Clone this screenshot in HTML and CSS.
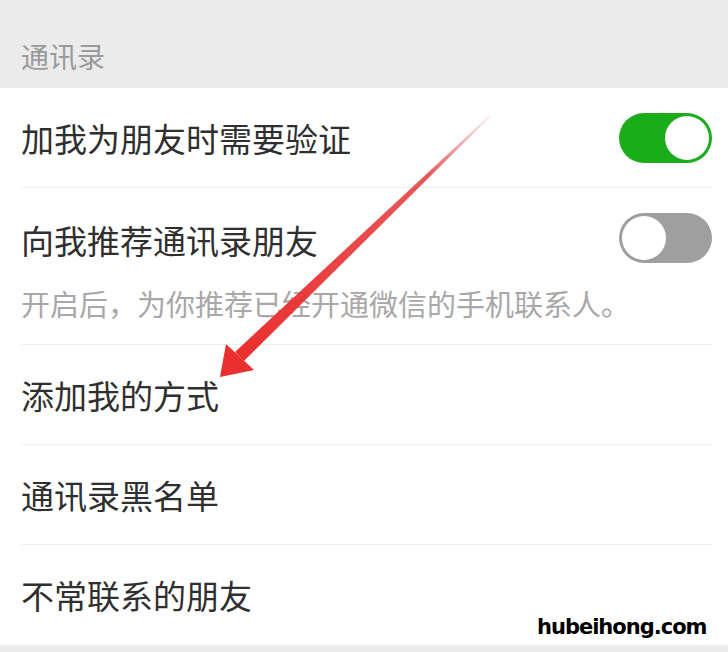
FILE: index.html
```html
<!DOCTYPE html>
<html lang="zh-CN">
<head>
<meta charset="utf-8">
<title>通讯录设置</title>
<link rel="stylesheet" href="styles.css">
</head>
<body>
<div class="page">
  <div class="section-title">通讯录</div>
  <div class="list">
    <div class="row">
      <span class="label">加我为朋友时需要验证</span>
      <span class="switch on"><span class="knob"></span></span>
    </div>
    <div class="row row-sub">
      <div class="row-main">
        <span class="label">向我推荐通讯录朋友</span>
        <span class="switch off"><span class="knob"></span></span>
      </div>
      <div class="sub">开启后，为你推荐已经开通微信的手机联系人。</div>
    </div>
    <div class="row"><span class="label">添加我的方式</span></div>
    <div class="row"><span class="label">通讯录黑名单</span></div>
    <div class="row last"><span class="label">不常联系的朋友</span></div>
  </div>
  <div class="bottom"></div>

  <svg class="arrow" width="728" height="652" viewBox="0 0 728 652">
    <defs>
      <linearGradient id="fade" x1="490" y1="115" x2="240" y2="355" gradientUnits="userSpaceOnUse">
        <stop offset="0" stop-color="#e8454a" stop-opacity="0.1"/>
        <stop offset="0.25" stop-color="#e53a3c" stop-opacity="0.85"/>
        <stop offset="1" stop-color="#ea2f2f"/>
      </linearGradient>
    </defs>
    <polygon points="490,115 491,116 244,361 235,352" fill="url(#fade)"/>
    <polygon points="220,377 226,344 254,370" fill="#ea2f2f"/>
  </svg>
  <div class="watermark">hubeihong.com</div>
</div>
</body>
</html>
```
FILE: styles.css
```css
html, body {
  margin: 0;
  padding: 0;
  background: #ffffff;
}
.page {
  position: relative;
  width: 728px;
  height: 652px;
  overflow: hidden;
  background: #ffffff;
  font-family: "Noto Sans CJK SC", "Noto Sans", sans-serif;
}
.section-title {
  height: 88px;
  box-sizing: border-box;
  padding: 38px 0 0 21px;
  background: #ebebeb;
  color: #9a9a9a;
  font-size: 28px;
  line-height: 36px;
}
.list {
  background: #ffffff;
  margin-right: 16px;
}
.row {
  display: flex;
  align-items: center;
  justify-content: space-between;
  height: 99px;
  margin-left: 21px;
  border-bottom: 1px solid #ededed;
}
.row.last {
  border-bottom: none;
  height: 100px;
}
.row-sub {
  display: block;
  height: auto;
  padding-bottom: 23px;
}
.row-main {
  display: flex;
  align-items: center;
  justify-content: space-between;
  height: 100px;
}
.label {
  color: #2f2f2f;
  font-size: 33px;
  line-height: 40px;
}
.row-main .label {
  position: relative;
  top: 2px;
}
.sub {
  margin-top: -3px;
  color: #a8a8a8;
  font-size: 29px;
  line-height: 36px;
}
.switch {
  display: flex;
  align-items: center;
  width: 93px;
  height: 50px;
  box-sizing: border-box;
  border-radius: 25px;
  padding: 3px;
}
.switch.on {
  background: #1aad19;
  justify-content: flex-end;
}
.switch.off {
  background: #9f9f9f;
  justify-content: flex-start;
}
.knob {
  width: 44px;
  height: 44px;
  border-radius: 50%;
  background: #ffffff;
}
.bottom {
  height: 7px;
  background: #ebebeb;
}
.arrow {
  position: absolute;
  left: 0;
  top: 0;
  pointer-events: none;
}
.watermark {
  position: absolute;
  left: 537px;
  top: 612px;
  font-family: "DejaVu Sans", sans-serif;
  font-weight: bold;
  font-size: 21px;
  line-height: 30px;
  color: #000000;
  letter-spacing: -1px;
}
```
